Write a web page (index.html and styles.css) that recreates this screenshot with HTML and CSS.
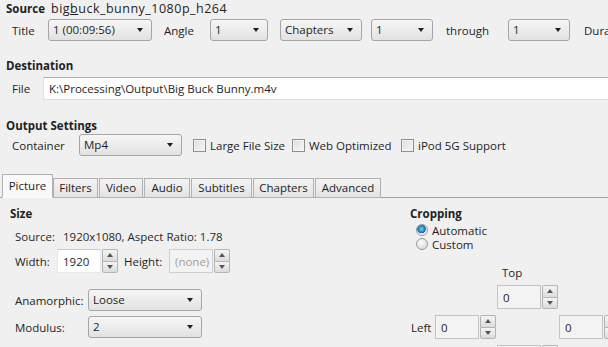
FILE: index.html
```html
<!DOCTYPE html>
<html lang="en">
<head>
    <meta charset="UTF-8">
    <title>HandBrake</title>
    <link rel="stylesheet" href="styles.css">
</head>
<body>
<div class="row source-row">
    <span class="heading source-label">Source</span>
    <span class="source-name">big<u>b</u>uck_bunny_1080p_h264</span>
</div>
<div class="row title-row">
    <span class="title-label">Title</span>
    <div class="combo title-combo">1 (00:09:56)</div>
    <span class="angle-label">Angle</span>
    <div class="combo angle-combo">1</div>
    <div class="combo chapters-combo">Chapters</div>
    <div class="combo num-combo">1</div>
    <span class="through-label">through</span>
    <div class="combo num-combo">1</div>
    <span class="duration-label">Duration</span>
</div>

<div class="row heading dest-heading">Destination</div>
<div class="row file-row">
    <span class="file-label">File</span>
    <div class="file-input">K:\Processing\Output\Big Buck Bunny.m4v</div>
</div>

<div class="row heading output-heading">Output Settings</div>
<div class="row container-row">
    <span class="container-label">Container</span>
    <div class="combo container-combo">Mp4</div>
    <label class="check-item large"><span class="check"></span>Large File Size</label>
    <label class="check-item web"><span class="check"></span>Web Optimized</label>
    <label class="check-item"><span class="check"></span>iPod 5G Support</label>
</div>

<div class="tabs">
    <div class="tab active t-picture">Picture</div>
    <div class="tab t-filters">Filters</div>
    <div class="tab t-video">Video</div>
    <div class="tab t-audio">Audio</div>
    <div class="tab t-subs">Subtitles</div>
    <div class="tab t-chapters">Chapters</div>
    <div class="tab t-advanced">Advanced</div>
</div>

<div class="tab-body">
    <div class="size-col">
        <div class="row heading section-title">Size</div>
        <div class="row info-row">
            <span class="info-label">Source:</span>
            <span>1920x1080, Aspect Ratio: 1.78</span>
        </div>
        <div class="row dims-row">
            <span class="width-label">Width:</span>
            <div class="spin">
                <div class="spin-field white">1920</div>
                <div class="spin-btns"><span class="up"></span><span class="down"></span></div>
            </div>
            <span class="height-label">Height:</span>
            <div class="spin">
                <div class="spin-field disabled">(none)</div>
                <div class="spin-btns"><span class="up"></span><span class="down"></span></div>
            </div>
        </div>
        <div class="row anamorphic-row">
            <span class="anam-label">Anamorphic:</span>
            <div class="combo anam-combo">Loose</div>
        </div>
        <div class="row modulus-row">
            <span class="anam-label">Modulus:</span>
            <div class="combo anam-combo">2</div>
        </div>
    </div>

    <div class="crop-col">
        <div class="row heading section-title">Cropping</div>
        <div class="row radio-row first"><span class="radio on"></span>Automatic</div>
        <div class="row radio-row"><span class="radio"></span>Custom</div>
        <div class="crop-grid">
            <span class="top-label">Top</span>
            <div class="spin crop-top">
                <div class="spin-field">0</div>
                <div class="spin-btns"><span class="up"></span><span class="down"></span></div>
            </div>
            <span class="left-label">Left</span>
            <div class="spin crop-left">
                <div class="spin-field">0</div>
                <div class="spin-btns"><span class="up"></span><span class="down"></span></div>
            </div>
            <div class="spin crop-right">
                <div class="spin-field">0</div>
                <div class="spin-btns"><span class="up"></span><span class="down"></span></div>
            </div>
            <div class="spin crop-bottom">
                <div class="spin-field">0</div>
                <div class="spin-btns"><span class="up"></span><span class="down"></span></div>
            </div>
        </div>
    </div>
</div>
</body>
</html>
```

FILE: styles.css
```css
html, body {
    margin: 0;
    height: 100%;
    overflow: hidden;
}
body {
    background: #f0f0f0;
    font-family: "Open Sans", "DejaVu Sans", sans-serif;
    font-size: 11.5px;
    color: #1e1e1e;
    white-space: nowrap;
}
.row {
    display: flex;
    align-items: center;
}
.row > * {
    flex-shrink: 0;
}
.heading {
    font-weight: bold;
}

/* source block */
.source-row {
    height: 16px;
    padding-left: 6px;
}
.source-label {
    width: 45px;
}
.source-name {
    font-size: 12.5px;
    letter-spacing: 0.5px;
}
.title-row {
    height: 22px;
    margin-top: 3px;
    padding-left: 12px;
}
.title-label {
    width: 36px;
}
.title-combo {
    width: 104px;
}
.angle-label {
    width: 58px;
    padding-left: 12px;
    box-sizing: border-box;
}
.angle-combo {
    width: 58px;
}
.chapters-combo {
    width: 82px;
    margin-left: 12px;
}
.num-combo {
    width: 62px;
    margin-left: 9px;
}
.through-label {
    width: 75px;
    padding-left: 13px;
    box-sizing: border-box;
}
.through-label + .num-combo {
    margin-left: 0;
}
.duration-label {
    margin-left: 14px;
}

/* combo box */
.combo {
    display: flex;
    align-items: center;
    box-sizing: border-box;
    height: 22px;
    padding: 0 8px 2px 4px;
    border: 1px solid #a5a5a5;
    border-radius: 3px;
    background: linear-gradient(#f6f6f6, #e2e2e2);
}
.combo::after {
    content: "";
    margin-left: auto;
    margin-top: 2px;
    border-left: 3.5px solid transparent;
    border-right: 3.5px solid transparent;
    border-top: 4px solid #1e1e1e;
}

/* destination */
.dest-heading {
    height: 16px;
    margin-top: 16px;
    padding-left: 6px;
}
.file-row {
    height: 23px;
    margin-top: 4px;
    padding-left: 12px;
}
.file-label {
    width: 31px;
}
.file-row .file-input {
    flex: 1;
    flex-shrink: 1;
    height: 23px;
    box-sizing: border-box;
    padding: 3px 5px 0;
    background: #fff;
    border: 1px solid #dbe1e8;
    border-top-color: #abb0b8;
    border-right: none;
}

/* output settings */
.output-heading {
    height: 16px;
    margin-top: 17px;
    padding-left: 6px;
}
.container-row {
    height: 22px;
    margin-top: 1px;
    padding-left: 12px;
}
.container-label {
    width: 67px;
}
.container-combo {
    width: 103px;
}
.check-item {
    display: flex;
    align-items: center;
}
.check-item.large {
    width: 99px;
    margin-left: 11px;
}
.check-item.web {
    width: 109px;
}
.check {
    width: 13px;
    height: 13px;
    box-sizing: border-box;
    margin-right: 4px;
    border: 1px solid #8f8f8f;
    background: linear-gradient(135deg, #dcdcdc, #f8f8f8);
    box-shadow: inset 0 0 0 1px #f4f4f4;
}

/* tabs */
.tabs {
    display: flex;
    align-items: flex-end;
    height: 23px;
    margin-top: 18px;
    padding-left: 2px;
    border-bottom: 1px solid #a3a3a3;
}
.tab {
    box-sizing: border-box;
    height: 20px;
    margin-bottom: -1px;
    margin-right: 1px;
    text-align: center;
    line-height: 17px;
    border: 1px solid #b1b1b1;
    background: linear-gradient(#f3f3f3, #e3e3e3);
}
.tab.active {
    height: 24px;
    line-height: 21px;
    background: #f9f9f9;
    border-bottom-color: #f9f9f9;
    margin-right: 0;
}
.t-picture { width: 51px; }
.t-filters { width: 45px; }
.t-video { width: 44px; }
.t-audio { width: 46px; }
.t-subs { width: 61px; }
.t-chapters { width: 61px; }
.t-advanced { width: 66px; }

/* tab body */
.tab-body {
    display: flex;
}
.size-col {
    width: 400px;
    flex-shrink: 0;
    padding-left: 10px;
    box-sizing: border-box;
}
.section-title {
    height: 16px;
    margin-top: 7px;
}
.info-row {
    height: 16px;
    margin-top: 7px;
    padding-left: 5px;
    color: #2a2a2a;
}
.info-label {
    width: 48px;
}
.dims-row {
    height: 24px;
    margin-top: 5px;
    padding-left: 5px;
}
.width-label {
    width: 42px;
}
.height-label {
    width: 45px;
    padding-left: 6px;
}
.anamorphic-row {
    height: 22px;
    margin-top: 16px;
    padding-left: 5px;
}
.modulus-row {
    height: 22px;
    margin-top: 5px;
    padding-left: 5px;
}
.anam-label {
    width: 73px;
}
.anam-combo {
    width: 114px;
}

/* spin boxes */
.spin {
    display: flex;
    gap: 1px;
    height: 24px;
}
.spin-field {
    width: 44px;
    box-sizing: border-box;
    padding: 4px 0 0 5px;
    border: 1px solid #c3c3c3;
    background: #f3f3f3;
}
.spin-field.white {
    background: #fff;
    border-color: #e6e9ee;
    border-top-color: #c9ccd1;
}
.spin-field.disabled {
    color: #a0a0a0;
    border-color: #cfcfcf;
}
.spin-btns {
    display: flex;
    flex-direction: column;
    width: 16px;
}
.spin-btns span {
    flex: 1;
    display: flex;
    align-items: center;
    justify-content: center;
    border: 1px solid #b4b4b4;
    background: linear-gradient(#f4f4f4, #dcdcdc);
}
.spin-btns .up {
    border-radius: 2px 2px 0 0;
    border-bottom: none;
}
.spin-btns .down {
    border-radius: 0 0 2px 2px;
}
.spin-btns .up::after {
    content: "";
    border-left: 3.5px solid transparent;
    border-right: 3.5px solid transparent;
    border-bottom: 4px solid #555;
}
.spin-btns .down::after {
    content: "";
    border-left: 3.5px solid transparent;
    border-right: 3.5px solid transparent;
    border-top: 4px solid #555;
}

/* cropping */
.crop-col {
    padding-left: 10px;
}
.radio-row {
    height: 14px;
    padding-left: 6px;
}
.radio-row.first {
    margin-top: 2px;
}
.radio {
    width: 12px;
    height: 12px;
    box-sizing: border-box;
    margin-right: 4px;
    border-radius: 50%;
    border: 1px solid #9a9a9a;
    background: radial-gradient(circle at 40% 35%, #fdfdfd, #cfcfcf);
}
.radio.on {
    background: radial-gradient(circle at 45% 40%, #7fd4f4 0, #1f8bbf 3px, #196a93 4px, #e2e2e2 4.5px, #f4f4f4 6px);
}
.crop-grid {
    display: grid;
    grid-template-columns: 25px 62px 62px 62px;
    grid-template-rows: 13px 24px 24px 24px;
    row-gap: 6px;
    margin-top: 15px;
    align-items: center;
}
.top-label {
    grid-column: 3;
    grid-row: 1;
    padding-left: 5px;
    line-height: 13px;
}
.crop-top {
    grid-column: 3;
    grid-row: 2;
}
.left-label {
    grid-column: 1;
    grid-row: 3;
    padding-left: 1px;
}
.crop-left {
    grid-column: 2;
    grid-row: 3;
}
.crop-right {
    grid-column: 4;
    grid-row: 3;
}
.crop-bottom {
    grid-column: 3;
    grid-row: 4;
}
```
